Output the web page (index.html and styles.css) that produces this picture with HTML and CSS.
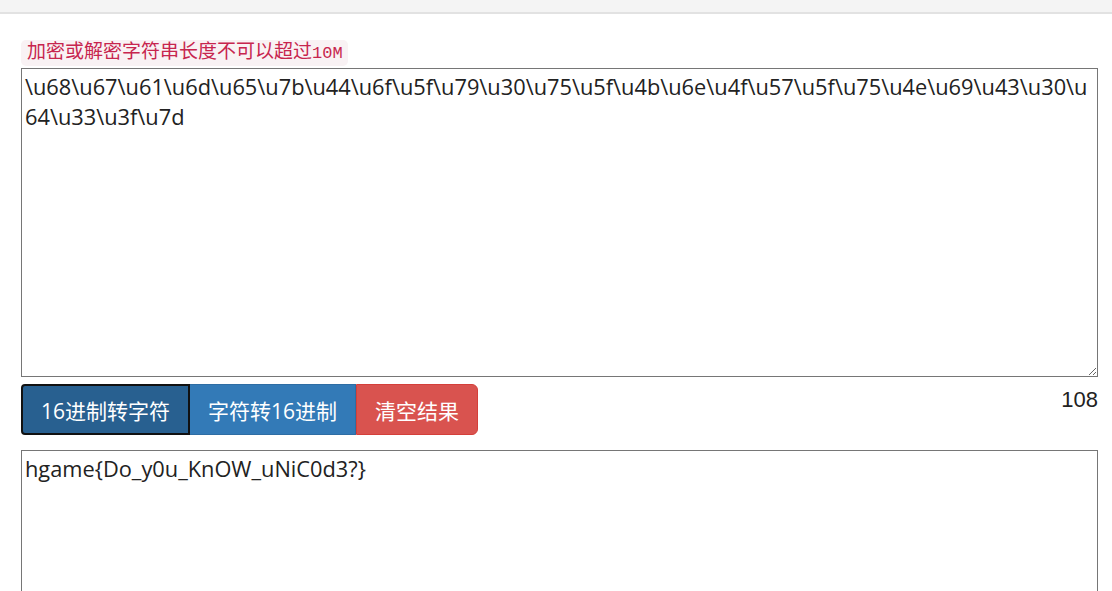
FILE: index.html
```html
<!DOCTYPE html>
<html lang="zh-CN">
<head>
<meta charset="utf-8">
<title>Unicode 转换</title>
<link rel="stylesheet" href="styles.css">
</head>
<body>
<div class="topbar"></div>
<main class="wrap">
  <code class="hint">加密或解密字符串长度不可以超过<span class="hint-num">10M</span></code>
  <textarea class="field field-input" spellcheck="false">\u68\u67\u61\u6d\u65\u7b\u44\u6f\u5f\u79\u30\u75\u5f\u4b\u6e\u4f\u57\u5f\u75\u4e\u69\u43\u30\u64\u33\u3f\u7d</textarea>
  <div class="actions">
    <div class="btn-group">
      <button class="btn btn-active">16进制转字符</button>
      <button class="btn btn-primary">字符转16进制</button>
      <button class="btn btn-danger">清空结果</button>
    </div>
    <span class="count">108</span>
  </div>
  <textarea class="field field-output" spellcheck="false">hgame{Do_y0u_KnOW_uNiC0d3?}</textarea>
</main>
</body>
</html>
```

FILE: styles.css
```css
html, body {
  margin: 0;
  padding: 0;
  background: #fff;
  overflow: hidden;
}
body {
  font-family: "Open Sans", "Noto Sans CJK SC", sans-serif;
  color: #333;
}
.topbar {
  height: 12px;
  background: #f4f4f4;
  border-bottom: 2px solid #e2e2e2;
}
.wrap {
  padding: 26px 14px 0 21px;
  display: flex;
  flex-direction: column;
  align-items: flex-start;
}
.hint {
  box-sizing: border-box;
  height: 26px;
  display: inline-block;
  font-family: "Liberation Mono", "Noto Sans CJK SC", monospace;
  font-size: 19px;
  line-height: 22px;
  padding: 2px 5px 2px 6px;
  color: #c7254e;
  background: #f9f2f4;
  border-radius: 5px;
  margin-bottom: 2px;
  overflow: hidden;
}
.hint-num {
  font-size: 17px;
  line-height: 1;
}
.field {
  box-sizing: border-box;
  width: 100%;
  margin: 0;
  border: 1px solid #767676;
  border-radius: 0;
  font-family: "Open Sans", "Noto Sans CJK SC", sans-serif;
  font-size: 21.8px;
  line-height: 30px;
  color: #222;
  padding: 3px 3px;
  outline: none;
  word-break: break-all;
}
.field-input {
  height: 309px;
}
.field-output {
  height: 160px;
  margin-top: 15px;
  resize: none;
}
.actions {
  width: 100%;
  display: flex;
  justify-content: space-between;
  align-items: flex-start;
  margin-top: 7px;
}
.btn-group {
  display: flex;
}
.btn {
  box-sizing: border-box;
  height: 51px;
  font-family: "Open Sans", "Noto Sans CJK SC", sans-serif;
  font-size: 21px;
  color: #fff;
  border: 1px solid transparent;
  margin: 0;
  padding: 0;
  cursor: pointer;
}
.btn-active {
  width: 169px;
  background: #286090;
  border: 2px solid #111;
  border-radius: 4px 0 0 4px;
}
.btn-primary {
  width: 166px;
  background: #337ab7;
  border-color: #2e6da4;
  border-left: none;
}
.btn-danger {
  width: 122px;
  background: #d9534f;
  border-color: #d43f3a;
  border-radius: 0 6px 6px 0;
}
.count {
  font-family: "Liberation Sans", Arial, sans-serif;
  font-size: 22px;
  line-height: 30px;
  color: #222;
  margin-top: 1px;
}
```
